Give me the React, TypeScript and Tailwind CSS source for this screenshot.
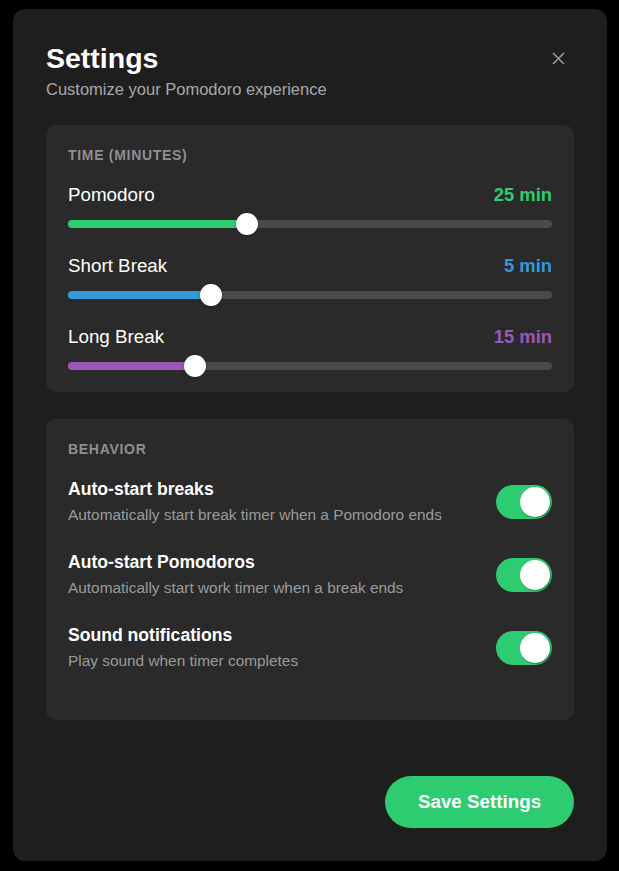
import { useState } from "react";

type SliderProps = {
  label: string;
  value: number;
  min: number;
  max: number;
  fill: string;
  text: string;
};

function TimeSlider({ label, value, min, max, fill, text }: SliderProps) {
  const pct = (value - min) / (max - min);
  return (
    <div>
      <div className="flex h-[26px] items-center justify-between">
        <span className="text-[18.8px] text-white">{label}</span>
        <span className={`text-[18.4px] font-bold ${text}`}>{value} min</span>
      </div>
      <div className="relative mt-[12px] h-2 rounded-full bg-[#4a4a4a]">
        <div
          className={`absolute left-0 top-0 h-2 rounded-full ${fill}`}
          style={{ width: `calc(11px + ${pct} * (100% - 22px))` }}
        />
        <div
          className="absolute top-1/2 h-[22px] w-[22px] -translate-x-1/2 -translate-y-1/2 rounded-full bg-white shadow-[0_1px_3px_rgba(0,0,0,0.3)]"
          style={{ left: `calc(11px + ${pct} * (100% - 22px))` }}
        />
      </div>
    </div>
  );
}

type ToggleRowProps = {
  title: string;
  desc: string;
  on: boolean;
  onToggle: () => void;
};

function ToggleRow({ title, desc, on, onToggle }: ToggleRowProps) {
  return (
    <div className="flex items-center justify-between">
      <div>
        <p className="text-[17.6px] font-bold leading-[24px] text-white">{title}</p>
        <p className="mt-[3px] text-[15.4px] leading-[22px] text-[#9a9a9a]">{desc}</p>
      </div>
      <button
        onClick={onToggle}
        className={`relative h-[34px] w-[56px] shrink-0 rounded-full ${on ? "bg-[#2ecc71]" : "bg-[#4a4a4a]"}`}
      >
        <span
          className={`absolute top-[2px] h-[30px] w-[30px] rounded-full bg-white shadow-[1px_1px_2px_rgba(0,0,0,0.35)] ${on ? "left-[24px]" : "left-[2px]"}`}
        />
      </button>
    </div>
  );
}

export default function App() {
  const [autoBreaks, setAutoBreaks] = useState(true);
  const [autoPomodoros, setAutoPomodoros] = useState(true);
  const [sound, setSound] = useState(true);

  return (
    <div className="min-h-[871px] bg-black pt-[9px] font-['Liberation_Sans',Arial,sans-serif]">
      <div className="ml-[13px] w-[594px] rounded-xl bg-[#1e1e1e] px-[33px] pb-[33px] pt-8">
        <div className="flex items-start justify-between">
          <div>
            <h1 className="text-[28.5px] font-bold leading-[34px] text-white">Settings</h1>
            <p className="mt-[2px] text-[16.5px] leading-[24px] text-[#a8a8a8]">
              Customize your Pomodoro experience
            </p>
          </div>
          <button className="mr-[9px] mt-[11px] text-[#9a9a9a]">
            <svg width="13" height="13" viewBox="0 0 13 13" fill="none" stroke="currentColor" strokeWidth="1.6">
              <path d="M1 1L12 12M12 1L1 12" />
            </svg>
          </button>
        </div>

        <div className="mt-6 rounded-[10px] bg-[#2a2a2a] px-[22px] pb-[22px] pt-5">
          <p className="text-[14px] font-bold uppercase leading-5 tracking-[0.05em] text-[#8f8f8f]">
            Time (minutes)
          </p>
          <div className="mt-[17px] flex flex-col gap-[25px]">
            <TimeSlider label="Pomodoro" value={25} min={5} max={60} fill="bg-[#2ecc71]" text="text-[#2ecc71]" />
            <TimeSlider label="Short Break" value={5} min={1} max={15} fill="bg-[#3498db]" text="text-[#3498db]" />
            <TimeSlider label="Long Break" value={15} min={5} max={45} fill="bg-[#9b59b6]" text="text-[#9b59b6]" />
          </div>
        </div>

        <div className="mt-[27px] rounded-[10px] bg-[#2a2a2a] px-[22px] pb-[48px] pt-5">
          <p className="text-[14px] font-bold uppercase leading-5 tracking-[0.05em] text-[#8f8f8f]">
            Behavior
          </p>
          <div className="mt-[18px] flex flex-col gap-[24px]">
            <ToggleRow
              title="Auto-start breaks"
              desc="Automatically start break timer when a Pomodoro ends"
              on={autoBreaks}
              onToggle={() => setAutoBreaks(!autoBreaks)}
            />
            <ToggleRow
              title="Auto-start Pomodoros"
              desc="Automatically start work timer when a break ends"
              on={autoPomodoros}
              onToggle={() => setAutoPomodoros(!autoPomodoros)}
            />
            <ToggleRow
              title="Sound notifications"
              desc="Play sound when timer completes"
              on={sound}
              onToggle={() => setSound(!sound)}
            />
          </div>
        </div>

        <div className="mt-[56px] flex justify-end">
          <button className="h-[52px] w-[189px] rounded-full bg-[#2ecc71] text-[18.8px] font-bold text-white">
            Save Settings
          </button>
        </div>
      </div>
    </div>
  );
}
